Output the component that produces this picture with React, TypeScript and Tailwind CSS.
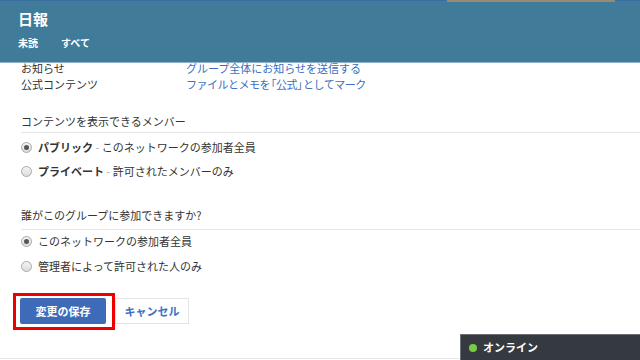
import React from "react";

const font = { fontFamily: '"Noto Sans CJK JP", "Noto Sans", sans-serif' };

function Radio({ checked }: { checked?: boolean }) {
  return (
    <span className="relative inline-flex h-[11px] w-[11px] shrink-0 items-center justify-center rounded-full border border-[#a9a9a9] bg-gradient-to-b from-[#f4f4f4] to-[#dcdcdc]">
      {checked && <span className="h-[5px] w-[5px] rounded-full bg-[#555]" />}
    </span>
  );
}

export default function App() {
  return (
    <div className="relative h-[360px] w-[640px] overflow-hidden bg-white text-[11px] text-[#333]" style={font}>
      {/* header */}
      <div className="relative z-10 h-[62px] bg-[#407b9a] pl-[18px] pt-[9px] text-white">
        <div className="absolute left-0 top-0 h-[1px] w-full bg-[#3b6fa3]" />
        <div className="absolute left-[447px] top-0 h-[2px] w-[168px] bg-[#9a8a70]" />
        <div className="text-[15px] font-bold leading-[20px]">日報</div>
        <div className="mt-[7px] flex gap-[23px] text-[10px] font-bold leading-[14px]">
          <span>未読</span>
          <span>すべて</span>
        </div>
        <div className="absolute bottom-[-1px] left-0 h-[1px] w-full bg-[#8fb3c6]" />
      </div>

      <div className="-mt-[2px] pl-[21px]">
        <div className="flex leading-[16px]">
          <span className="w-[165px]">お知らせ</span>
          <span className="text-[#3a6fc2]">グループ全体にお知らせを送信する</span>
        </div>
        <div className="flex leading-[16px]">
          <span className="w-[165px]">公式コンテンツ</span>
          <span className="tracking-[-0.5px] text-[#3a6fc2]">
            ファイルとメモ<span className="tracking-[-5px]">を</span>「公式<span className="tracking-[-5px]">」</span>としてマーク
          </span>
        </div>

        <div className="mt-[21px] leading-[16px]">コンテンツを表示できるメンバー</div>
        <div className="mt-[3px] h-[1px] bg-[#e6e6e6]" />
        <div className="mt-[6px] flex items-center gap-[6px] leading-[16px]">
          <Radio checked />
          <span>
            <span className="font-bold">パブリック</span>
            <span className="text-[#aaa]"> - </span>このネットワークの参加者全員
          </span>
        </div>
        <div className="mt-[8px] flex items-center gap-[6px] leading-[16px]">
          <Radio />
          <span>
            <span className="font-bold">プライベート</span>
            <span className="text-[#aaa]"> - </span>許可されたメンバーのみ
          </span>
        </div>

        <div className="mt-[28px] leading-[16px]">誰がこのグループに参加できますか?</div>
        <div className="mt-[6px] h-[1px] bg-[#e6e6e6]" />
        <div className="mt-[3px] flex items-center gap-[6px] leading-[16px]">
          <Radio checked />
          <span>このネットワークの参加者全員</span>
        </div>
        <div className="mt-[9px] flex items-center gap-[6px] leading-[16px]">
          <Radio />
          <span>管理者によって許可された人のみ</span>
        </div>
      </div>

      <div className="mt-[24px] flex pl-[20px] leading-[16px]">
        <div className="relative">
          <button className="block h-[26px] w-[86px] rounded-[2px] bg-[#3d6bb8] text-[11px] font-bold text-white">
            変更の保存
          </button>
          <div className="pointer-events-none absolute -bottom-[6px] -left-[7px] -right-[9px] -top-[5px] border-[3px] border-[#ee0000]" />
        </div>
        <button className="ml-[9px] block h-[26px] w-[74px] border border-[#e4e4e4] bg-white text-[11px] font-bold text-[#3a6fc2]">
          キャンセル
        </button>
      </div>

      <div className="absolute bottom-[1px] left-0 h-[1px] w-full bg-[#e8e8e8]" />

      <div className="absolute bottom-0 left-[460px] flex h-[26px] w-[180px] items-center gap-[6px] border-l border-t border-[#6b7077] bg-[#343a40] pl-[8px] text-[11px] font-bold text-white">
        <span className="h-[8px] w-[8px] rounded-full bg-[#7ac943]" />
        <span>オンライン</span>
      </div>
    </div>
  );
}
